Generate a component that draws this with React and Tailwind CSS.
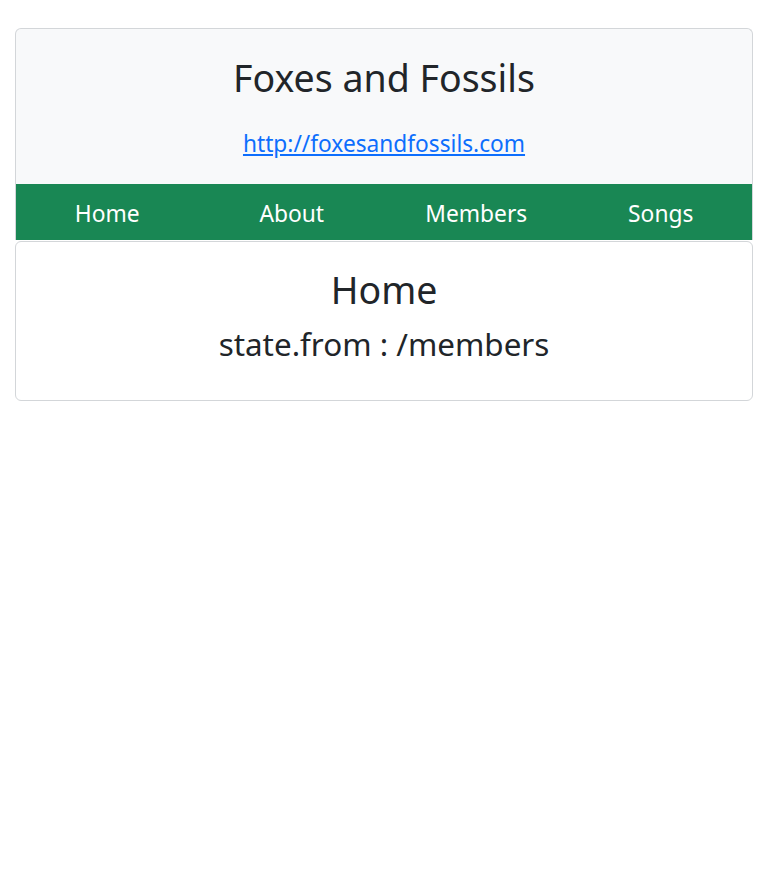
import React from 'react'

export default function App() {
  const links = ['Home', 'About', 'Members', 'Songs']

  return (
    <div
      className="min-h-screen bg-white pt-[28px] text-[#212529]"
      style={{ fontFamily: '"Noto Sans", "Noto Sans CJK KR", sans-serif' }}
    >
      {/* Header card */}
      <div className="ml-[15px] w-[738px] overflow-hidden rounded-t-md border border-b-0 border-[#d3d6d9] bg-[#f8f9fa]">
        <div className="flex h-[155px] flex-col items-center">
          <h1 className="mt-[27px] text-[37.5px] leading-[44px] font-normal">Foxes and Fossils</h1>
          <a href="#" className="mt-[29px] text-[22.7px] leading-[30px] text-[#0d6efd] underline">
            http://foxesandfossils.com
          </a>
        </div>
        <nav className="-mx-px grid h-[56px] grid-cols-4 bg-[#198754]">
          {links.map(l => (
            <a key={l} href="#" className="flex items-center justify-center pt-[4px] text-[22.8px] text-white">
              {l}
            </a>
          ))}
        </nav>
      </div>

      {/* Content card */}
      <div className="mt-px ml-[15px] flex h-[160px] w-[738px] flex-col items-center rounded-md border border-[#d3d6d9] bg-white">
        <h1 className="mt-[26px] text-[37.5px] leading-[44px] font-normal">Home</h1>
        <h2 className="mt-[12px] text-[31.4px] leading-[40px] font-normal">state.from : /members</h2>
      </div>
    </div>
  )
}
